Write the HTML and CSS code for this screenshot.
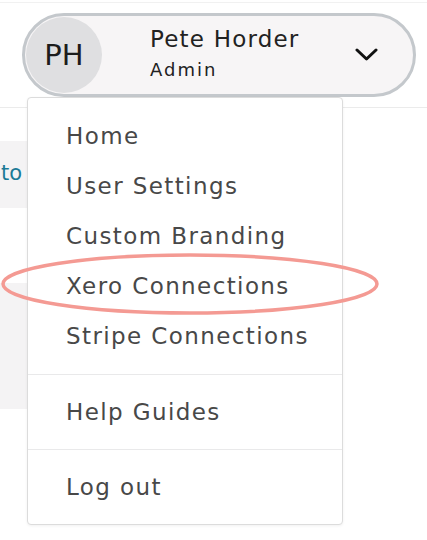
FILE: index.html
```html
<!DOCTYPE html>
<html lang="en">
<head>
    <meta charset="UTF-8">
    <meta name="viewport" content="width=device-width, initial-scale=1.0">
    <title>Account menu</title>
    <link rel="stylesheet" href="styles.css">
</head>
<body>
    <div class="header">
        <div class="user-pill">
            <div class="avatar">PH</div>
            <div class="user-info">
                <div class="user-name">Pete Horder</div>
                <div class="user-role">Admin</div>
            </div>
            <svg class="chevron" width="23" height="14" viewBox="0 0 23 14">
                <polyline points="2,2 11.5,11 21,2" fill="none" stroke="#111" stroke-width="3" stroke-linecap="round" stroke-linejoin="round"/>
            </svg>
        </div>
    </div>

    <div class="content">
        <div class="panel panel-link">to</div>
        <div class="panel panel-tall"></div>
    </div>

    <!-- dropdown sits over the page -->
    <div class="menu">
        <div class="menu-section first">
            <a class="menu-item">Home</a>
            <a class="menu-item">User Settings</a>
            <a class="menu-item">Custom Branding</a>
            <a class="menu-item">Xero Connections</a>
            <a class="menu-item">Stripe Connections</a>
        </div>
        <div class="menu-section">
            <a class="menu-item">Help Guides</a>
        </div>
        <div class="menu-section">
            <a class="menu-item">Log out</a>
        </div>
    </div>

    <!-- highlight ring drawn over the screenshot -->
    <svg class="highlight" width="390" height="72" viewBox="0 0 390 72">
        <ellipse cx="190" cy="35" rx="187" ry="29" fill="none" stroke="#f49a93" stroke-width="3.5"/>
    </svg>
</body>
</html>
```

FILE: styles.css
```css
body {
    margin: 0;
    font-family: "DejaVu Sans", sans-serif;
    background-color: #fff;
    color: #4a4a4a;
    position: relative;
    height: 540px;
    overflow: hidden;
}
.header {
    height: 106px;
    border-top: 1px solid #f1f1f1;
    margin-top: 2px;
    border-bottom: 1px solid #ebebeb;
    padding: 10px 0 0 22px;
    box-sizing: border-box;
}
.user-pill {
    box-sizing: border-box;
    width: 394px;
    height: 84px;
    border: 3px solid #c4c8cc;
    border-radius: 42px;
    background-color: #f7f5f6;
    display: flex;
    align-items: center;
}
.avatar {
    width: 76px;
    height: 76px;
    margin-left: 1px;
    border-radius: 50%;
    background-color: #dfdfe1;
    color: #1c1c1c;
    font-size: 29px;
    display: flex;
    align-items: center;
    justify-content: center;
}
.user-info {
    margin-left: 48px;
    margin-top: -4px;
    color: #222;
}
.user-name {
    font-size: 23px;
    line-height: 29px;
    letter-spacing: 1.2px;
}
.user-role {
    margin-top: 5px;
    font-size: 18px;
    line-height: 22px;
    letter-spacing: 2px;
}
.chevron {
    margin-left: auto;
    margin-right: 35px;
}
.content {
    padding-top: 33px;
}
.panel {
    width: 200px;
    background-color: #f4f3f4;
}
.panel-link {
    height: 67px;
    color: #1b7a96;
    font-size: 21px;
    line-height: 64px;
    padding-left: 1px;
    box-sizing: border-box;
}
.panel-tall {
    height: 126px;
    margin-top: 75px;
}
.menu {
    position: absolute;
    left: 27px;
    top: 97px;
    width: 316px;
    box-sizing: border-box;
    background-color: #fff;
    border: 1px solid #dcdcdc;
    border-radius: 4px;
    box-shadow: 0 1px 3px rgba(0, 0, 0, 0.06);
}
.menu-section {
    padding: 12px 0;
    border-top: 1px solid #e9e9ea;
}
.menu-section.first {
    padding: 13px 0;
    border-top: none;
}
.menu-item {
    display: block;
    height: 50px;
    line-height: 50px;
    padding-left: 38px;
    font-size: 23px;
    letter-spacing: 1.4px;
    color: #484848;
    white-space: nowrap;
}
.highlight {
    position: absolute;
    left: 0;
    top: 249px;
}
```
